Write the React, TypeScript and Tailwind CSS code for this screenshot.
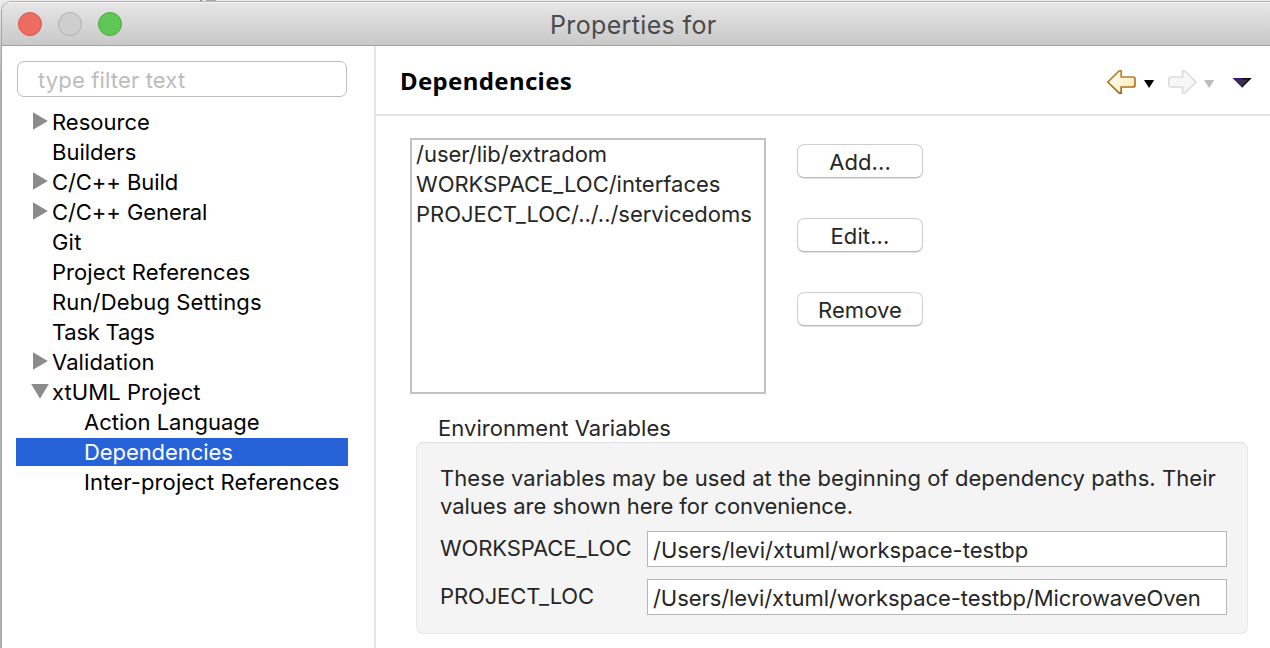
type TreeItem = {
  label: string;
  state?: "closed" | "open";
  nested?: boolean;
  selected?: boolean;
  tracking?: string;
};

const tree: TreeItem[] = [
  { label: "Resource", state: "closed" },
  { label: "Builders" },
  { label: "C/C++ Build", state: "closed", tracking: "tracking-[-0.08px]" },
  { label: "C/C++ General", state: "closed", tracking: "tracking-[-0.08px]" },
  { label: "Git", tracking: "tracking-[0.2px]" },
  { label: "Project References", tracking: "tracking-[0.07px]" },
  { label: "Run/Debug Settings", tracking: "tracking-[0.14px]" },
  { label: "Task Tags", tracking: "tracking-[-0.25px]" },
  { label: "Validation", state: "closed", tracking: "tracking-[0.1px]" },
  { label: "xtUML Project", state: "open", tracking: "tracking-[0.08px]" },
  { label: "Action Language", nested: true },
  { label: "Dependencies", nested: true, selected: true, tracking: "tracking-[-0.08px]" },
  { label: "Inter-project References", nested: true, tracking: "tracking-[0.12px]" },
];

const paths = ["/user/lib/extradom", "WORKSPACE_LOC/interfaces", "PROJECT_LOC/../../servicedoms"];

const variables = [
  { name: "WORKSPACE_LOC", value: "/Users/levi/xtuml/workspace-testbp", tracking: "tracking-[0px]" },
  { name: "PROJECT_LOC", value: "/Users/levi/xtuml/workspace-testbp/MicrowaveOven", tracking: "tracking-[-0.07px]" },
];

function Disclosure({ state }: { state?: "closed" | "open" }) {
  return (
    <svg className="h-[30px] w-5 shrink-0" viewBox="0 0 20 30" fill="#8b8b8b">
      {state === "closed" && <path d="M3 5.2v17.6L17.8 14z" />}
      {state === "open" && <path d="M1.2 7h17.6L10 21.8z" />}
    </svg>
  );
}

function Toolbar() {
  return (
    <svg className="h-[30px] w-[150px]" viewBox="1106 67 150 30">
      <defs>
        <linearGradient id="gold" x1="0" y1="0" x2="1" y2="1">
          <stop offset="0.2" stopColor="#fffef6" />
          <stop offset="1" stopColor="#fbe6a0" />
        </linearGradient>
        <linearGradient id="goldEdge" x1="0" y1="0" x2="0" y2="1">
          <stop offset="0" stopColor="#bd8a36" />
          <stop offset="1" stopColor="#a2661c" />
        </linearGradient>
      </defs>
      <path
        d="M1107.8 82l11.4-11.2h2V77h11.6q2.2 0 2.2 2v6q0 2-2.2 2h-11.6v6.2h-2z"
        fill="url(#gold)"
        stroke="url(#goldEdge)"
        strokeWidth="1.7"
      />
      <path d="M1144 80h10.2l-5.1 8z" fill="#000" />
      <path
        d="M1196 82l-11.4-11.2h-2V77H1171q-2.2 0-2.2 2v6q0 2 2.2 2h11.6v6.2h2z"
        fill="#f7f7f7"
        stroke="#dcdcdc"
        strokeWidth="1.6"
      />
      <path d="M1204 80h10.2l-5.1 8z" fill="#bdbdbd" />
      <path d="M1232.5 78h10l-0.3 9.8z" fill="#3b1580" />
      <path d="M1242 78h9.8l-9.7 9.8z" fill="#100a14" />
      <path d="M1235.5 79.5h13l-6.5 6.5z" fill="#3b3142" />
    </svg>
  );
}

function PushButton({ label }: { label: string }) {
  return (
    <button className="h-[34px] w-[126px] rounded-[7px] border border-[#cfcfcf] border-b-[#b9b9b9] bg-white text-center leading-[34px] tracking-[0.1px] text-[#262626] shadow-[0_1px_1px_rgba(0,0,0,0.12)]">
      {label}
    </button>
  );
}

export default function App() {
  return (
    <div className="h-[648px] w-[1270px] overflow-hidden bg-gradient-to-b from-[#ececec] to-[#b3b3b3] to-[12%] pl-px font-['Inter','Liberation_Sans',sans-serif] text-[22px] text-[#262626]">
      <div className="flex h-px gap-1 pl-[199px]">
        <span className="w-0.5 bg-[#8a8a8a]" />
        <span className="w-2.5 bg-[#a8a8a8]" />
      </div>
      <div className="flex h-[647px] w-[1269px] flex-col overflow-hidden rounded-tl-[10px] border-t border-l border-t-[#b4b4b4] border-l-[#a6a6a6] bg-white">
        <header className="flex h-11 shrink-0 items-center border-b border-[#a0a0a0] bg-gradient-to-b from-[#e6e6e6] to-[#c9c9c9] shadow-[inset_0_1px_0_#f5f5f5]">
          <div className="flex w-[374px] gap-4 pl-4">
            <span className="size-6 rounded-full border border-[#d9584c] bg-[#ee6b60]" />
            <span className="size-6 rounded-full border border-[#b0b0b0] bg-[#cecece]" />
            <span className="size-6 rounded-full border border-[#4da93f] bg-[#5fc753]" />
          </div>
          <h1 className="pt-[3px] pl-[174px] text-[25px] leading-none tracking-[0.35px] text-[#4b4b4b]">
            Properties for
          </h1>
        </header>

        <div className="flex min-h-0 flex-1">
          <aside className="w-[374px] shrink-0 border-r-2 border-[#e4e4e4] pt-[15px] pr-[26px] pl-[14px] text-black">
            <input
              placeholder="type filter text"
              className="ml-px block h-9 w-[330px] rounded-[7px] border border-[#bdbdbd] bg-white pt-0.5 pl-5 tracking-[0.15px] outline-none placeholder:text-[#bcbcbc]"
            />
            <ul className="mt-[10px]">
              {tree.map((item) => (
                <li key={item.label} className="h-[30px] py-px">
                  <div
                    className={
                      item.selected
                        ? "flex h-7 w-[332px] items-center bg-[#2663d9] pl-[14px] text-white"
                        : "flex h-7 w-[332px] items-center pl-[14px]"
                    }
                  >
                    <Disclosure state={item.state} />
                    <span
                      className={`${item.nested ? "pl-[34px]" : "pl-0.5"} whitespace-nowrap ${item.tracking ?? ""}`}
                    >
                      {item.label}
                    </span>
                  </div>
                </li>
              ))}
            </ul>
          </aside>

          <main className="min-w-0 flex-1">
            <div className="flex h-[70px] items-center justify-between border-b-2 border-[#e4e4e4] pt-[3px] pr-[14px] pl-6">
              <h2 className="-mt-px font-['Noto_Sans','Open_Sans',sans-serif] text-[24px] font-bold tracking-[0.35px] text-black">
                Dependencies
              </h2>
              <Toolbar />
            </div>

            <div className="flex pt-[22px] pl-[34px]">
              <ul className="h-64 w-[356px] border-2 border-[#c3c3c3] pl-1">
                {paths.map((path) => (
                  <li key={path} className="h-[30px] leading-[29px] tracking-[-0.02px] whitespace-nowrap">
                    {path}
                  </li>
                ))}
              </ul>
              <div className="flex flex-col gap-10 pt-1.5 pl-[31px]">
                <PushButton label="Add..." />
                <PushButton label="Edit..." />
                <PushButton label="Remove" />
              </div>
            </div>

            <section className="pt-5 pl-10">
              <h3 className="pl-[22px] leading-7 tracking-[0.04px]">Environment Variables</h3>
              <div className="h-48 w-[832px] rounded-[7px] border border-[#e9e9e9] border-t-[#dfdfdf] bg-[#f4f4f4] pt-[21px] pl-[23px]">
                <p className="leading-7 tracking-[0.06px] whitespace-nowrap">
                  These variables may be used at the beginning of dependency paths. Their
                  <br />
                  <span className="tracking-[-0.04px]">values are shown here for convenience.</span>
                </p>
                <div className="flex flex-col gap-3 pt-[11px]">
                  {variables.map((v) => (
                    <div key={v.name} className="flex h-9">
                      <span className="w-[207px] shrink-0 leading-[34px] tracking-[-0.12px]">{v.name}</span>
                      <span
                        className={`w-[580px] shrink-0 border border-[#b6b6b6] bg-white pl-[5px] leading-[36px] whitespace-nowrap ${v.tracking}`}
                      >
                        {v.value}
                      </span>
                    </div>
                  ))}
                </div>
              </div>
            </section>
          </main>
        </div>
      </div>
    </div>
  );
}
